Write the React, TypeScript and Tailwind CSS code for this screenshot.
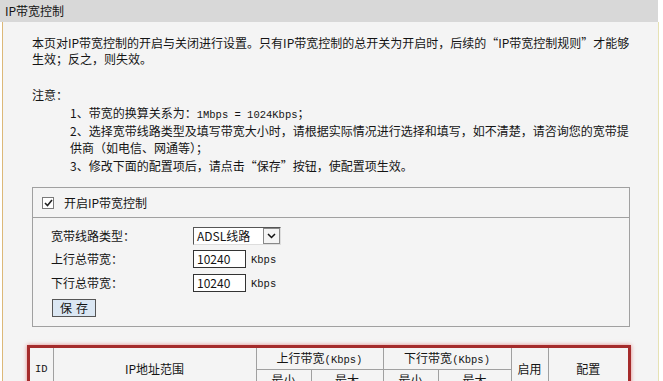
import React from "react";

const mono = "font-['Liberation_Mono',monospace] text-[10.5px] leading-none";

export default function App() {
  return (
    <div className="w-[663px] h-[381px] overflow-hidden bg-white text-[12px] text-[#141414] font-['Noto_Sans_CJK_SC',sans-serif]">
      <div className="h-[22px] w-[658px] bg-[#d8d8d8] pl-[5px] flex items-center leading-[16px]">
        IP带宽控制
      </div>
      <div className="ml-[2px] w-[657px] h-[359px] border-l border-l-[#dcb878] border-r border-r-[#e6e2b4] bg-[#f4f4f4] pl-[29px] pt-[13px]">
        <p className="leading-[16px] whitespace-nowrap">
          本页对IP带宽控制的开启与关闭进行设置。只有IP带宽控制的总开关为开启时，后续的“IP带宽控制规则”才能够
          <br />
          生效；反之，则失效。
        </p>
        <p className="mt-[20px] leading-[16px]">注意：</p>
        <div className="mt-[1px] pl-[38px] leading-[17.5px] whitespace-nowrap">
          <div className="h-[17.5px]">
            1、带宽的换算关系为：<span className={mono}>1Mbps = 1024Kbps</span>；
          </div>
          <div className="h-[17.5px]">2、选择宽带线路类型及填写带宽大小时，请根据实际情况进行选择和填写，如不清楚，请咨询您的宽带提</div>
          <div className="h-[17.5px]">供商（如电信、网通等）；</div>
          <div className="h-[17.5px]">3、修改下面的配置项后，请点击“保存”按钮，使配置项生效。</div>
        </div>

        <div className="mt-[13px] w-[598px] border border-[#a0a0a0]">
          <div className="h-[30px] flex items-center pl-[9px] border-b border-[#a0a0a0]">
            <div className="w-[12px] h-[12px] bg-white border border-[#7a7a7a] flex items-center justify-center">
              <svg width="9" height="8" viewBox="0 0 9 8">
                <path d="M1 4 L3.5 6.5 L8 1" fill="none" stroke="#222" strokeWidth="1.6" />
              </svg>
            </div>
            <span className="ml-[10px] leading-[16px]">开启IP带宽控制</span>
          </div>
          <div className="h-[108px] pl-[18px] pt-[9px]">
            <div className="flex items-center h-[18px]">
              <span className="w-[142px]">宽带线路类型：</span>
              <div className="w-[88px] h-[18px] flex bg-white border border-t-[#555] border-l-[#555] border-r-[#ddd] border-b-[#ddd]">
                <span className="flex-1 pl-[3px] leading-[16px]">ADSL线路</span>
                <div className="w-[17px] h-[16px] border border-[#888] bg-[#f4f4f4] flex items-center justify-center">
                  <svg width="9" height="6" viewBox="0 0 9 6">
                    <path d="M1 1 L4.5 4.5 L8 1" fill="none" stroke="#111" strokeWidth="1.5" />
                  </svg>
                </div>
              </div>
            </div>
            <div className="flex items-center h-[18px] mt-[5px]">
              <span className="w-[142px]">上行总带宽：</span>
              <div className="w-[53px] h-[18px] bg-white border border-[#333] pl-[3px] leading-[15px]">10240</div>
              <span className={`ml-[5px] mt-[3px] ${mono}`}>Kbps</span>
            </div>
            <div className="flex items-center h-[18px] mt-[6px]">
              <span className="w-[142px]">下行总带宽：</span>
              <div className="w-[53px] h-[18px] bg-white border border-[#333] pl-[3px] leading-[15px]">10240</div>
              <span className={`ml-[5px] mt-[3px] ${mono}`}>Kbps</span>
            </div>
            <div className="mt-[7px] ml-[1px] w-[44px] h-[18px] bg-[#dbe7f3] border border-[#555] flex items-center justify-center leading-[16px] tracking-[4px] pl-[4px]">
              保存
            </div>
          </div>
        </div>

        <div className="mt-[18px] -ml-[5px] w-[604px] border-[3px] border-[#a52b2b] shadow-[0_0_4px_rgba(220,60,60,0.6)] bg-[#f4f4f4]">
          <table className="border-collapse w-full table-fixed leading-[16px]">
            <colgroup>
              <col className="w-[23px]" />
              <col className="w-[203px]" />
              <col className="w-[55px]" />
              <col className="w-[72px]" />
              <col className="w-[55px]" />
              <col className="w-[73px]" />
              <col className="w-[37px]" />
              <col className="w-[80px]" />
            </colgroup>
            <tbody>
              <tr className="h-[21px]">
                <td rowSpan={2} className={`border border-[#a0a0a0] text-center border-l-0 border-t-0 ${mono}`}>ID</td>
                <td rowSpan={2} className="border border-[#a0a0a0] text-center border-t-0">IP地址范围</td>
                <td colSpan={2} className="border border-[#a0a0a0] text-center border-t-0 whitespace-nowrap">
                  上行带宽<span className={mono}>(Kbps)</span>
                </td>
                <td colSpan={2} className="border border-[#a0a0a0] text-center border-t-0 whitespace-nowrap">
                  下行带宽<span className={mono}>(Kbps)</span>
                </td>
                <td rowSpan={2} className="border border-[#a0a0a0] text-center border-t-0">启用</td>
                <td rowSpan={2} className="border border-[#a0a0a0] text-center border-t-0 border-r-0">配置</td>
              </tr>
              <tr className="h-[21px]">
                <td className="border border-[#a0a0a0] text-center">最小</td>
                <td className="border border-[#a0a0a0] text-center">最大</td>
                <td className="border border-[#a0a0a0] text-center">最小</td>
                <td className="border border-[#a0a0a0] text-center">最大</td>
              </tr>
            </tbody>
          </table>
        </div>
      </div>
    </div>
  );
}
